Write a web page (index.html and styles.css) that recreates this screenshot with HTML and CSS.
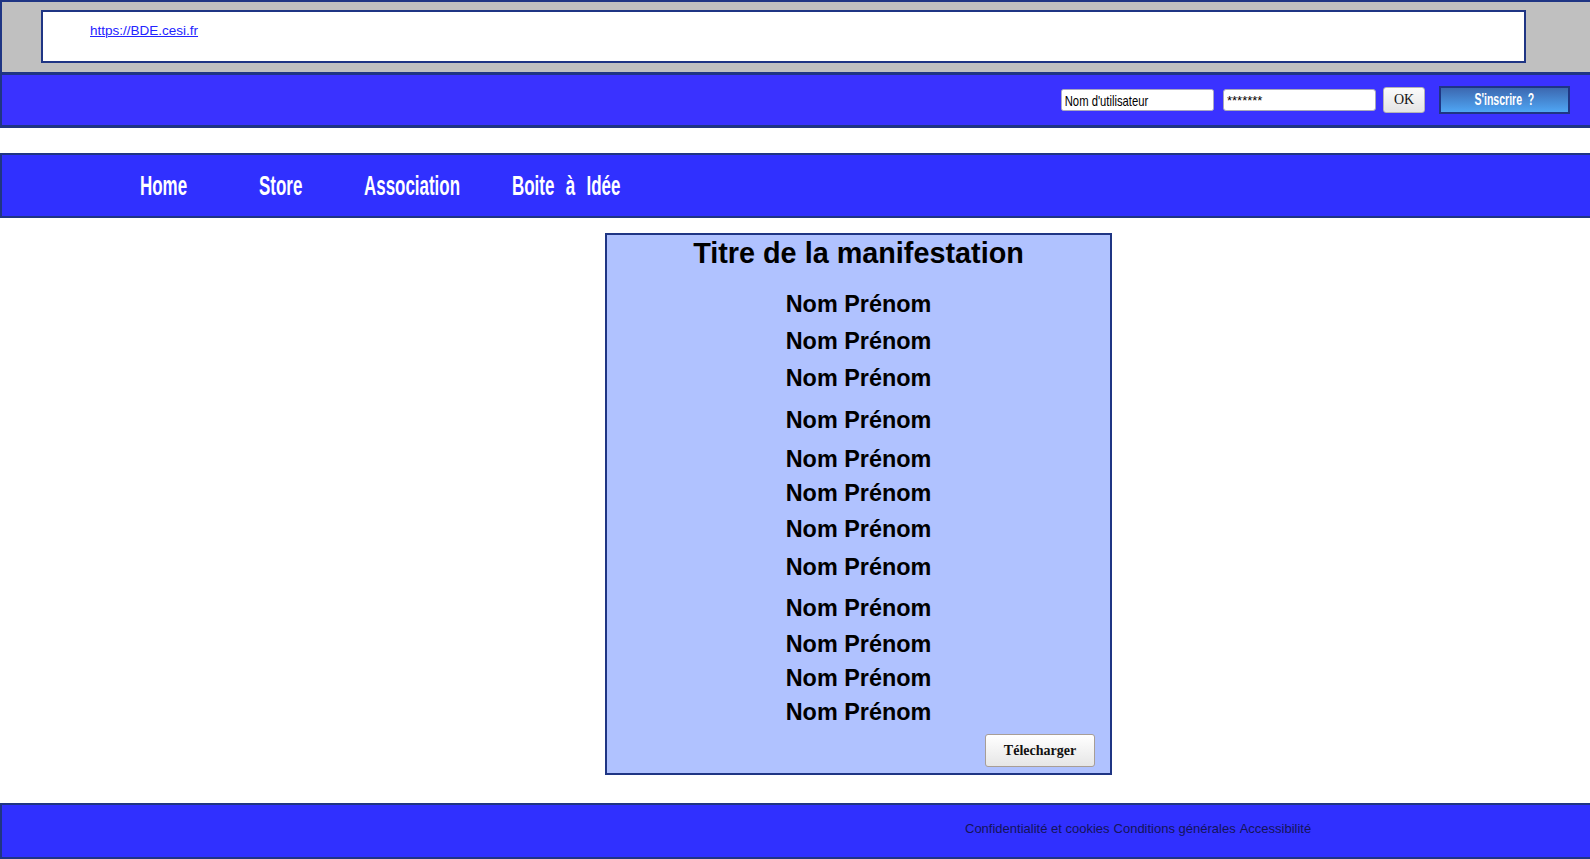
FILE: index.html
```html
<!DOCTYPE html>
<html lang="fr">
<head>
<meta charset="utf-8">
<title>BDE CESI</title>
<link rel="stylesheet" href="styles.css">
</head>
<body>
<header class="site-header">
  <div class="url-box"><a class="url-link" href="#">https://BDE.cesi.fr</a></div>
</header>
<div class="login-bar">
  <form class="login-form">
    <input class="field field-user" type="text" value="Nom d'utilisateur">
    <input class="field field-pass" type="text" value="*******">
    <button class="btn-ok" type="button">OK</button>
    <button class="btn-signup" type="button"><span class="squeeze">S'inscrire ?</span></button>
  </form>
</div>
<nav class="main-nav">
  <a class="nav-item" href="#"><span class="squeeze">Home</span></a>
  <a class="nav-item" href="#"><span class="squeeze">Store</span></a>
  <a class="nav-item" href="#"><span class="squeeze">Association</span></a>
  <a class="nav-item" href="#"><span class="squeeze wide-words">Boite à Idée</span></a>
</nav>
<main class="content">
  <section class="event-card">
    <h2 class="event-title">Titre de la manifestation</h2>
    <ul class="participants">
      <li>Nom Prénom</li>
      <li>Nom Prénom</li>
      <li>Nom Prénom</li>
      <li>Nom Prénom</li>
      <li>Nom Prénom</li>
      <li>Nom Prénom</li>
      <li>Nom Prénom</li>
      <li>Nom Prénom</li>
      <li>Nom Prénom</li>
      <li>Nom Prénom</li>
      <li>Nom Prénom</li>
      <li>Nom Prénom</li>
    </ul>
    <div class="card-actions">
      <button class="btn-download" type="button">Télecharger</button>
    </div>
  </section>
</main>
<footer class="site-footer">
  <span>Confidentialité et cookies</span> <span>Conditions générales</span> <span>Accessibilité</span>
</footer>
</body>
</html>
```
FILE: styles.css
```css
* { box-sizing: border-box; }

html, body {
  margin: 0;
  padding: 0;
  background: #ffffff;
  font-family: "Liberation Sans", Arial, sans-serif;
  overflow: hidden;
}

/* ---------- header ---------- */
.site-header {
  background: #c0c0c0;
  border-top: 2px solid #1f3584;
  border-left: 2px solid #1f3584;
  border-bottom: 3px solid #1f3584;
  padding: 8px 64px 9px 39px;
}

.url-box {
  background: #ffffff;
  border: 2px solid #1f3584;
  height: 53px;
  padding: 9px 0 0 47px;
}

.url-link {
  font-size: 13.5px;
  line-height: 15px;
  color: #2323ff;
}

/* ---------- login bar ---------- */
.login-bar {
  background: #3a32ff;
  border-left: 2px solid #1f3584;
  border-bottom: 3px solid #1f3584;
  height: 53px;
  padding-right: 20px;
  display: flex;
  justify-content: flex-end;
  align-items: center;
}

.login-form {
  display: flex;
  align-items: center;
  margin: 0;
}

.field {
  width: 153px;
  height: 22px;
  margin: 0 9px 0 0;
  padding: 0 3px;
  border: 1px solid #a8a8b8;
  border-radius: 3px;
  background: #ffffff;
  color: #000000;
  font-family: "Liberation Sans", Arial, sans-serif;
  font-size: 13px;
  line-height: 20px;
}

/* condensed look: widen then squeeze horizontally */
.field-user {
  width: 204px;
  padding: 0 4px;
  font-size: 15px;
  transform: scaleX(0.75);
  transform-origin: left center;
  margin-right: -42px;
}

.field-pass {
  margin-right: 7px;
}

.btn-ok {
  width: 42px;
  height: 26px;
  padding: 0;
  border: 1px solid #b4b4b4;
  border-radius: 3px;
  background: linear-gradient(#fbfbfb, #e4e4e4);
  font-family: "Liberation Serif", "Times New Roman", serif;
  font-size: 14px;
  color: #111;
  margin-right: 14px;
}

.btn-signup {
  width: 131px;
  height: 28px;
  padding: 0;
  border: 2px solid #1f3584;
  background: linear-gradient(#3c68b0, #4fa6f4);
  color: #ffffff;
  font-family: "Liberation Sans", Arial, sans-serif;
  font-weight: bold;
  font-size: 16px;
  display: flex;
  justify-content: center;
  align-items: center;
  overflow: hidden;
}

.btn-signup .squeeze {
  transform: scaleX(0.66);
  transform-origin: center;
  word-spacing: 4px;
}

.squeeze { display: inline-block; white-space: nowrap; }

/* ---------- main nav ---------- */
.main-nav {
  margin-top: 25px;
  background: #3030ff;
  border-top: 2px solid #1f3584;
  border-bottom: 2px solid #1f3584;
  border-left: 2px solid #1f3584;
  height: 65px;
  padding-left: 138px;
  display: flex;
  align-items: center;
}

.nav-item {
  color: #ffffff;
  text-decoration: none;
  font-weight: bold;
  font-size: 28px;
  line-height: 32px;
  flex: none;
}

.nav-item .squeeze {
  transform: scaleX(0.605);
  transform-origin: left center;
}

.nav-item:nth-child(1) { width: 119px; }
.nav-item:nth-child(2) { width: 105px; }
.nav-item:nth-child(3) { width: 148px; }
.nav-item:nth-child(4) { width: 200px; }

.wide-words { word-spacing: 11px; }

/* ---------- content ---------- */
.content {
  padding: 15px 0 28px 605px;
}

.event-card {
  width: 507px;
  height: 542px;
  background: #b0c2ff;
  border: 2px solid #1f3584;
  display: flex;
  flex-direction: column;
}

.event-title {
  margin: 0;
  padding-top: 2px;
  text-align: center;
  font-size: 28.8px;
  line-height: 32px;
  font-weight: bold;
  color: #000;
}

.participants {
  list-style: none;
  margin: 22px 0 0;
  padding: 0;
  text-align: center;
}

.participants li {
  font-size: 23.4px;
  line-height: 26px;
  font-weight: bold;
  color: #000;
}

.participants li:nth-child(1) { margin-top: 0; }
.participants li:nth-child(2) { margin-top: 11px; }
.participants li:nth-child(3) { margin-top: 11px; }
.participants li:nth-child(4) { margin-top: 16px; }
.participants li:nth-child(5) { margin-top: 13px; }
.participants li:nth-child(6) { margin-top: 8px; }
.participants li:nth-child(7) { margin-top: 10px; }
.participants li:nth-child(8) { margin-top: 12px; }
.participants li:nth-child(9) { margin-top: 15px; }
.participants li:nth-child(10) { margin-top: 10px; }
.participants li:nth-child(11) { margin-top: 8px; }
.participants li:nth-child(12) { margin-top: 8px; }

.card-actions {
  margin-top: auto;
  padding: 0 15px 6px 0;
  display: flex;
  justify-content: flex-end;
}

.btn-download {
  width: 110px;
  height: 33px;
  padding: 0;
  border: 1px solid #a89e96;
  border-radius: 3px;
  background: linear-gradient(#ffffff, #e6e6e6);
  font-family: "Liberation Serif", "Times New Roman", serif;
  font-weight: bold;
  font-size: 14px;
  color: #111;
}

/* ---------- footer ---------- */
.site-footer {
  background: #3030ff;
  border-top: 2px solid #1f3584;
  border-bottom: 2px solid #1f3584;
  border-left: 2px solid #1f3584;
  height: 56px;
  padding: 0 0 6px 963px;
  display: flex;
  align-items: center;
  gap: 4px;
  font-size: 13px;
  color: #14145a;
}
```
